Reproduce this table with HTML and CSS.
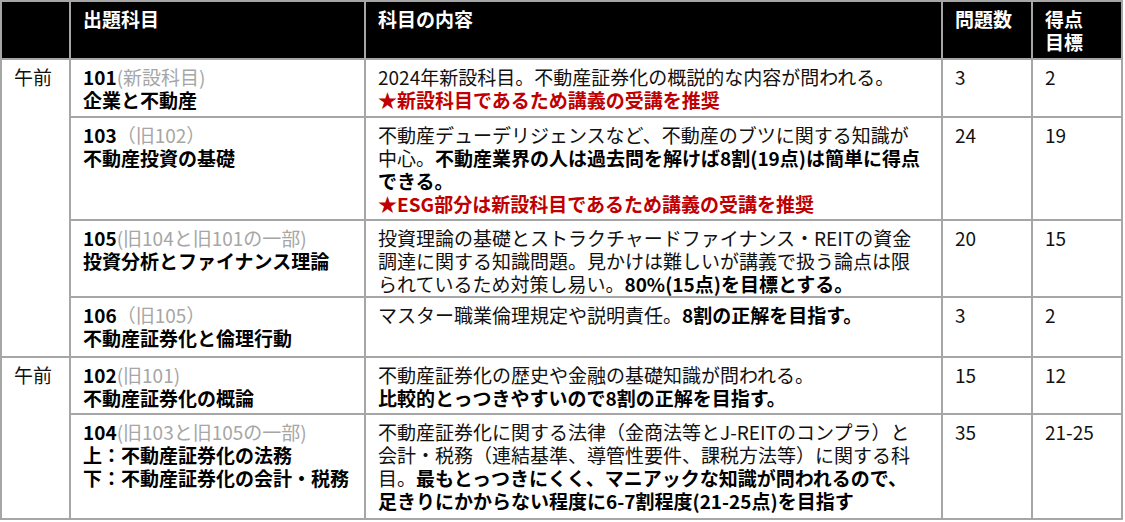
FILE: index.html
```html
<!DOCTYPE html>
<html lang="ja">
<head>
<meta charset="utf-8">
<title>出題科目</title>
<link rel="stylesheet" href="styles.css">
</head>
<body>
<table class="exam">
  <colgroup>
    <col class="c-half">
    <col class="c-subj">
    <col class="c-desc">
    <col class="c-num">
    <col class="c-goal">
  </colgroup>
  <thead>
    <tr class="r-head">
      <th></th>
      <th>出題科目</th>
      <th>科目の内容</th>
      <th>問題数</th>
      <th>得点<br>目標</th>
    </tr>
  </thead>
  <tbody>
    <tr class="r1">
      <td rowspan="4">午前</td>
      <td class="subj"><b>101</b><span class="old">(新設科目)</span><br><b>企業と不動産</b></td>
      <td>2024年新設科目。不動産証券化の概説的な内容が問われる。<br><b class="red">★新設科目であるため講義の受講を推奨</b></td>
      <td>3</td>
      <td>2</td>
    </tr>
    <tr class="r2">
      <td class="subj"><b>103</b><span class="old">（旧102）</span><br><b>不動産投資の基礎</b></td>
      <td>不動産デューデリジェンスなど、不動産のブツに関する知識が<br>中心。<b>不動産業界の人は過去問を解けば8割(19点)は簡単に得点<br>できる。</b><br><b class="red">★ESG部分は新設科目であるため講義の受講を推奨</b></td>
      <td>24</td>
      <td>19</td>
    </tr>
    <tr class="r3">
      <td class="subj"><b>105</b><span class="old">(旧104と旧101の一部)</span><br><b>投資分析とファイナンス理論</b></td>
      <td>投資理論の基礎とストラクチャードファイナンス・REITの資金<br>調達に関する知識問題。見かけは難しいが講義で扱う論点は限<br>られているため対策し易い。<b>80%(15点)を目標とする。</b></td>
      <td>20</td>
      <td>15</td>
    </tr>
    <tr class="r4">
      <td class="subj"><b>106</b><span class="old">（旧105）</span><br><b>不動産証券化と倫理行動</b></td>
      <td>マスター職業倫理規定や説明責任。<b>8割の正解を目指す。</b></td>
      <td>3</td>
      <td>2</td>
    </tr>
    <tr class="r5">
      <td rowspan="2">午前</td>
      <td class="subj"><b>102</b><span class="old">(旧101)</span><br><b>不動産証券化の概論</b></td>
      <td>不動産証券化の歴史や金融の基礎知識が問われる。<br><b>比較的とっつきやすいので8割の正解を目指す。</b></td>
      <td>15</td>
      <td>12</td>
    </tr>
    <tr class="r6">
      <td class="subj"><b>104</b><span class="old">(旧103と旧105の一部)</span><br><b>上：不動産証券化の法務<br>下：不動産証券化の会計・税務</b></td>
      <td>不動産証券化に関する法律（金商法等とJ-REITのコンプラ）と<br>会計・税務（連結基準、導管性要件、課税方法等）に関する科<br>目。<b>最もとっつきにくく、マニアックな知識が問われるので、<br>足きりにかからない程度に6-7割程度(21-25点)を目指す</b></td>
      <td>35</td>
      <td>21-25</td>
    </tr>
  </tbody>
</table>
</body>
</html>
```
FILE: styles.css
```css
html, body {
  margin: 0;
  padding: 0;
  background: #fff;
}

.exam {
  border-collapse: collapse;
  table-layout: fixed;
  width: 1123px;
  font-family: "Noto Sans CJK JP", "Noto Sans", sans-serif;
  font-size: 19px;
  line-height: 23px;
  color: #111;
}

.c-half { width: 69px; }
.c-subj { width: 295px; }
.c-desc { width: 577px; }
.c-num { width: 90px; }
.c-goal { width: 90px; }

.exam th,
.exam td {
  border: 2px solid #a6a6a6;
  padding: 5px 6px 0 12px;
  text-align: left;
  vertical-align: top;
  white-space: nowrap;
}

.exam th {
  background: #000;
  color: #fff;
  font-weight: 700;
}

.exam b {
  font-weight: 700;
  color: #000;
}

.exam .red {
  color: #c00000;
}

.old {
  color: #a6a6a6;
  font-weight: 400;
}

.r-head { height: 58px; }
.r1 { height: 58px; }
.r2 { height: 103px; }
.r3 { height: 77px; }
.r4 { height: 60px; }
.r5 { height: 57px; }
.r6 { height: 105px; }
```
